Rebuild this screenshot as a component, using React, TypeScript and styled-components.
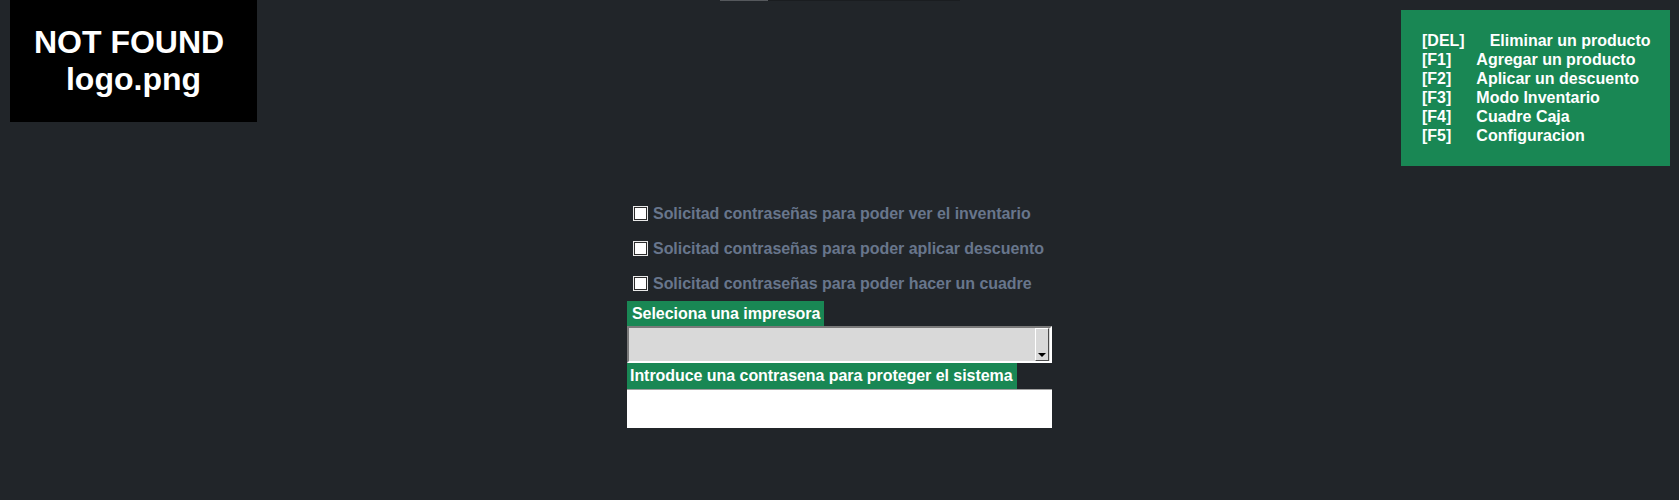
import React from "react";
import styled, { createGlobalStyle } from "styled-components";

const Global = createGlobalStyle`
  html, body {
    margin: 0;
    padding: 0;
    background: #212529;
    min-height: 100%;
  }
  body {
    font-family: "Liberation Sans", Arial, sans-serif;
    min-height: 500px;
  }
`;

const Page = styled.div`
  display: flex;
  flex-direction: column;
  min-height: 500px;
  background: #212529;
`;

const Header = styled.header`
  display: flex;
  align-items: flex-start;
  height: 167px;
`;

const Logo = styled.div`
  margin-left: 10px;
  width: 247px;
  height: 122px;
  background: #000;
  color: #fff;
  font-weight: bold;
  font-size: 32px;
  display: flex;
  flex-direction: column;
  justify-content: center;
  align-items: center;
  text-align: center;
`;

const Progress = styled.div`
  margin-left: 463px;
  width: 240px;
  height: 1px;
  background: #1a1d20;
  display: flex;
`;

const ProgressFill = styled.div`
  height: 100%;
  background: #55585c;
`;

const Shortcuts = styled.div`
  margin-left: auto;
  margin-right: 9px;
  margin-top: 10px;
  width: 269px;
  height: 156px;
  box-sizing: border-box;
  padding: 21px 21px 20px;
  background: #198754;
  color: #fff;
  font-weight: bold;
  font-size: 16px;
  line-height: 19px;
`;

const ShortcutRow = styled.div`
  display: flex;
  white-space: nowrap;
`;

const Key = styled.span`
  margin-right: 25px;
`;

const Form = styled.section`
  margin-top: 29px;
  margin-left: 627px;
  width: 425px;
  display: flex;
  flex-direction: column;
  align-items: flex-start;
`;

const CheckRow = styled.label`
  display: flex;
  align-items: center;
  height: 35px;
  padding-left: 7px;
  color: #68768c;
  font-weight: bold;
  font-size: 16px;
  letter-spacing: -0.04px;
  cursor: pointer;
`;

const Check = styled.input`
  appearance: none;
  margin: 0 6px 0 0;
  width: 13px;
  height: 13px;
  box-sizing: border-box;
  background: #fff;
  border: 1px solid #2b2b2b;
  box-shadow: 0 0 0 1px #e8e8e8;
  flex: none;
`;

const FieldLabel = styled.div<{ $h: number }>`
  display: inline-block;
  background: #198754;
  color: #fff;
  font-weight: bold;
  font-size: 16px;
  letter-spacing: -0.05px;
  line-height: ${(p) => p.$h}px;
  padding: 0 4px 0 ${(p) => (p.$h === 25 ? 5 : 3)}px;
  white-space: nowrap;
`;

const SelectBox = styled.div`
  width: 425px;
  height: 37px;
  box-sizing: border-box;
  background: #d9d9d9;
  border: 2px solid;
  border-color: #7a7a7a #ffffff #ffffff #7a7a7a;
  display: flex;
  justify-content: flex-end;
  padding: 0 1px 0 0;
`;

const DropButton = styled.div`
  width: 14px;
  height: 100%;
  box-sizing: border-box;
  background: #d9d9d9;
  border: 1px solid;
  border-color: #ffffff #4a4a4a #4a4a4a #ffffff;
  display: flex;
  align-items: flex-end;
  justify-content: center;
  padding-bottom: 3px;
`;

const Arrow = styled.span`
  width: 0;
  height: 0;
  border-left: 4px solid transparent;
  border-right: 4px solid transparent;
  border-top: 4px solid #000;
`;

const TextInput = styled.input`
  width: 425px;
  height: 39px;
  box-sizing: border-box;
  margin: 0;
  background: #fff;
  border: none;
  border-top: 1px solid #a0a0a0;
  outline: none;
  font-family: "Liberation Sans", Arial, sans-serif;
  font-size: 16px;
`;

const shortcuts = [
  ["[DEL]", "Eliminar un producto"],
  ["[F1]", "Agregar un producto"],
  ["[F2]", "Aplicar un descuento"],
  ["[F3]", "Modo Inventario"],
  ["[F4]", "Cuadre Caja"],
  ["[F5]", "Configuracion"],
];

const options = [
  "Solicitad contraseñas para poder ver el inventario",
  "Solicitad contraseñas para poder aplicar descuento",
  "Solicitad contraseñas para poder hacer un cuadre",
];

export default function App() {
  return (
    <Page>
      <Global />
      <Header>
        <Logo>
          <div>NOT FOUND{"\u00a0"}</div>
          <div>logo.png</div>
        </Logo>
        <Progress>
          <ProgressFill style={{ width: "20%" }} />
        </Progress>
        <Shortcuts>
          {shortcuts.map(([k, v]) => (
            <ShortcutRow key={k}>
              <Key>{k}</Key>
              <span>{v}</span>
            </ShortcutRow>
          ))}
        </Shortcuts>
      </Header>
      <Form>
        {options.map((o) => (
          <CheckRow key={o}>
            <Check type="checkbox" />
            {o}
          </CheckRow>
        ))}
        <FieldLabel $h={25}>Seleciona una impresora</FieldLabel>
        <SelectBox>
          <DropButton>
            <Arrow />
          </DropButton>
        </SelectBox>
        <FieldLabel $h={26}>Introduce una contrasena para proteger el sistema</FieldLabel>
        <TextInput type="password" />
      </Form>
    </Page>
  );
}
